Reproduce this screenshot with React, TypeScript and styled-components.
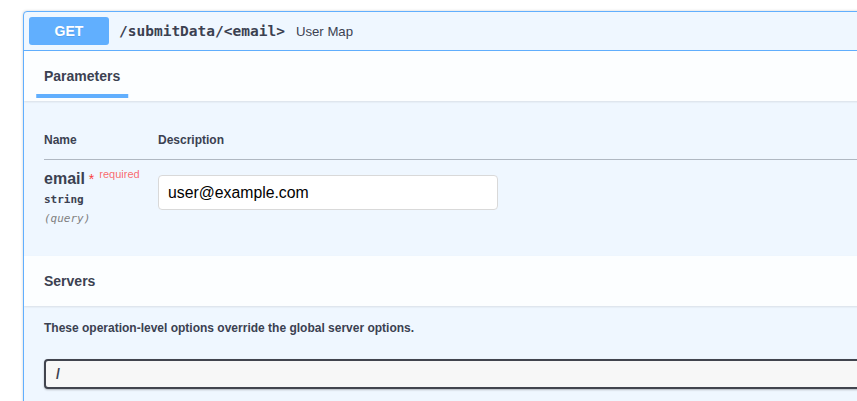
import React from 'react';
import styled, { createGlobalStyle } from 'styled-components';

const GlobalStyle = createGlobalStyle`
  html, body {
    margin: 0;
    padding: 0;
    background: #fff;
    overflow: hidden;
  }
  body {
    font-family: "Liberation Sans", Arial, sans-serif;
    color: #3b4151;
  }
`;

const Page = styled.div`
  padding: 11px 0 0 23px;
  width: 1100px;
`;

const OpBlock = styled.div`
  width: 1060px;
  border: 1px solid #61affe;
  border-radius: 4px;
  background: #eff7ff;
  box-shadow: 0 0 3px rgba(0, 0, 0, 0.19);
  overflow: hidden;
`;

const Summary = styled.div`
  display: flex;
  align-items: center;
  padding: 5px;
  border-bottom: 1px solid #61affe;
`;

const Method = styled.span`
  min-width: 80px;
  padding: 6px 0;
  border-radius: 3px;
  background: #61affe;
  color: #fff;
  font-size: 14px;
  line-height: 16px;
  font-weight: 700;
  text-align: center;
  text-shadow: 0 1px 0 rgba(0, 0, 0, 0.1);
`;

const Path = styled.span`
  padding: 0 10px;
  font-family: "DejaVu Sans Mono", "Liberation Mono", monospace;
  font-size: 14.5px;
  font-weight: 700;
  color: #3b4151;
`;

const SummaryText = styled.span`
  padding-left: 1px;
  font-size: 13.2px;
  color: #3b4151;
`;

const SectionHeader = styled.div`
  display: flex;
  align-items: center;
  min-height: 50px;
  box-sizing: border-box;
  padding: 8px 20px;
  background: rgba(255, 255, 255, 0.8);
  box-shadow: 0 1px 2px rgba(0, 0, 0, 0.1);
  position: relative;
`;

const Title = styled.h4<{ $active?: boolean }>`
  margin: 0;
  font-size: 14px;
  font-weight: 700;
  color: #3b4151;

  span {
    position: relative;
  }

  span::after {
    content: ${p => (p.$active ? '""' : 'none')};
    position: absolute;
    left: 50%;
    bottom: -14px;
    width: 120%;
    height: 4px;
    transform: translateX(-50%);
    background: #61affe;
  }
`;

const TableWrap = styled.div`
  padding: 20px 20px 20px;
`;

const HeadRow = styled.div`
  display: grid;
  grid-template-columns: 114px 1fr;
  border-bottom: 1px solid rgba(59, 65, 81, 0.35);
`;

const HeadCell = styled.div`
  padding: 12px 0;
  font-size: 12px;
  line-height: 14px;
  font-weight: 700;
  color: #3b4151;
`;

const ParamRow = styled.div`
  display: grid;
  grid-template-columns: 114px 1fr;
  align-items: start;
  padding: 9px 0 10px;
`;

const ParamName = styled.div`
  font-size: 16px;
  line-height: 19px;
  font-weight: 700;
  color: #3b4151;
`;

const Star = styled.span`
  color: #f93e3e;
  font-size: 14px;
  line-height: 0;
  font-weight: 400;
`;

const Required = styled.span`
  position: relative;
  top: -6px;
  padding-left: 5px;
  font-size: 11px;
  line-height: 0;
  font-weight: 400;
  color: rgba(255, 0, 0, 0.6);
`;

const ParamType = styled.div`
  padding: 5px 0;
  font-family: "DejaVu Sans Mono", "Liberation Mono", monospace;
  font-size: 11px;
  line-height: 14px;
  font-weight: 700;
  color: #3b4151;
`;

const ParamIn = styled.div`
  font-family: "DejaVu Sans Mono", "Liberation Mono", monospace;
  font-size: 11px;
  line-height: 14px;
  font-style: italic;
  color: #808080;
`;

const TextInput = styled.input`
  display: block;
  box-sizing: border-box;
  width: 340px;
  height: 35px;
  margin: 6px 0 0;
  padding: 6px 9px;
  border: 1px solid #d9d9d9;
  border-radius: 4px;
  background: #fff;
  font-family: "Liberation Sans", Arial, sans-serif;
  font-size: 15.8px;
  color: #000;
  outline: none;
`;

const ServersBody = styled.div`
  padding: 15px 20px 40px;
`;

const Note = styled.div`
  font-size: 12px;
  line-height: 14px;
  font-weight: 700;
  color: #3b4151;
`;

const ServerSelect = styled.div`
  margin-top: 24px;
  box-sizing: border-box;
  height: 30px;
  padding: 5px 40px 5px 10px;
  border: 2px solid #41444e;
  border-radius: 4px;
  background: #f7f7f7;
  box-shadow: 0 1px 2px 0 rgba(0, 0, 0, 0.25);
  font-size: 14px;
  line-height: 16px;
  font-weight: 700;
  color: #3b4151;
`;

export default function App() {
  return (
    <Page>
      <GlobalStyle />
      <OpBlock>
        <Summary>
          <Method>GET</Method>
          <Path>/submitData/&lt;email&gt;</Path>
          <SummaryText>User Map</SummaryText>
        </Summary>

        <SectionHeader>
          <Title $active>
            <span>Parameters</span>
          </Title>
        </SectionHeader>

        <TableWrap>
          <HeadRow>
            <HeadCell>Name</HeadCell>
            <HeadCell>Description</HeadCell>
          </HeadRow>
          <ParamRow>
            <div>
              <ParamName>
                email<Star>&nbsp;*</Star>
                <Required>required</Required>
              </ParamName>
              <ParamType>string</ParamType>
              <ParamIn>(query)</ParamIn>
            </div>
            <div>
              <TextInput defaultValue="user@example.com" />
            </div>
          </ParamRow>
        </TableWrap>

        <SectionHeader>
          <Title>
            <span>Servers</span>
          </Title>
        </SectionHeader>

        <ServersBody>
          <Note>These operation-level options override the global server options.</Note>
          <ServerSelect>/</ServerSelect>
        </ServersBody>
      </OpBlock>
    </Page>
  );
}
